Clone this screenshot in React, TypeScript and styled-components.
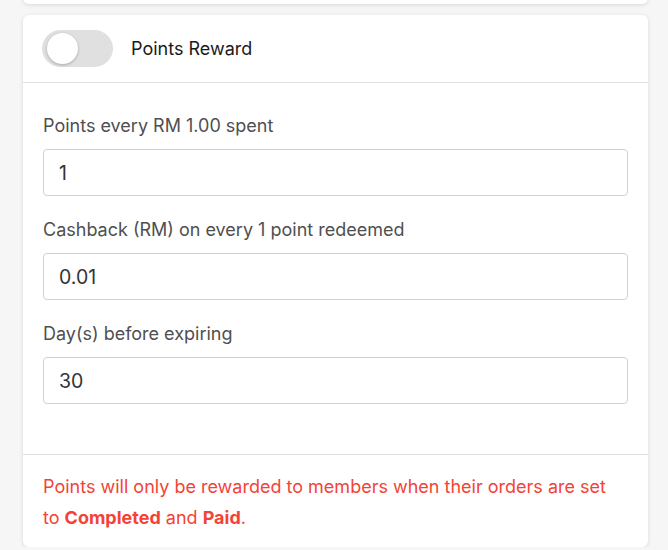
import React from "react";
import styled, { createGlobalStyle } from "styled-components";

const GlobalStyle = createGlobalStyle`
  html, body {
    margin: 0;
    padding: 0;
    background: #f6f6f6;
    font-family: Inter, "Noto Sans", sans-serif;
  }
`;

const Page = styled.div`
  margin-top: -40px;
  padding: 0 20px 0 23px;
  display: flex;
  flex-direction: column;
  gap: 11px;
`;

const Card = styled.div<{ $stub?: boolean }>`
  background: #fff;
  border-radius: 6px;
  box-shadow: 0 1px 4px rgba(0, 0, 0, 0.12);
  height: ${(p) => (p.$stub ? "44px" : "auto")};
`;

const Header = styled.div`
  display: flex;
  align-items: center;
  gap: 18px;
  height: 67px;
  padding: 0 20px 0 19px;
  border-bottom: 1px solid #e2e2e2;
`;

const Track = styled.div<{ $on?: boolean }>`
  width: 71px;
  height: 37px;
  border-radius: 19px;
  background: ${(p) => (p.$on ? "#4caf50" : "#e0e0e0")};
  display: flex;
  align-items: center;
  padding: 0 5px;
  box-sizing: border-box;
`;

const Knob = styled.div`
  width: 31px;
  height: 31px;
  border-radius: 50%;
  background: #fff;
  box-shadow: 0 1px 3px rgba(0, 0, 0, 0.25);
`;

const Title = styled.div`
  font-size: 18px;
  color: #1a1a1a;
`;

const Body = styled.div`
  padding: 31px 20px 50px;
  display: flex;
  flex-direction: column;
  gap: 22px;
`;

const Group = styled.div`
  display: flex;
  flex-direction: column;
  gap: 11px;
`;

const Label = styled.label`
  font-size: 18px;
  line-height: 24px;
  color: #4f4f4f;
`;

const Input = styled.input`
  height: 47px;
  box-sizing: border-box;
  border: 1px solid #cfd1d6;
  border-radius: 4px;
  padding: 0 15px;
  font-family: inherit;
  font-size: 19.5px;
  color: #333;
  outline: none;
  width: 100%;
`;

const Footer = styled.div`
  border-top: 1px solid #e2e2e2;
  padding: 16px 34px 14px 20px;
  font-size: 18px;
  line-height: 31px;
  color: #f44336;

  b {
    font-weight: 700;
  }
`;

const fields = [
  { label: "Points every RM 1.00 spent", value: "1" },
  { label: "Cashback (RM) on every 1 point redeemed", value: "0.01" },
  { label: "Day(s) before expiring", value: "30" },
];

export default function App() {
  return (
    <>
      <GlobalStyle />
      <Page>
        <Card $stub />
        <Card>
          <Header>
            <Track>
              <Knob />
            </Track>
            <Title>Points Reward</Title>
          </Header>
          <Body>
            {fields.map((f) => (
              <Group key={f.label}>
                <Label>{f.label}</Label>
                <Input defaultValue={f.value} />
              </Group>
            ))}
          </Body>
          <Footer>
            Points will only be rewarded to members when their orders are set
            to <b>Completed</b> and <b>Paid</b>.
          </Footer>
        </Card>
      </Page>
    </>
  );
}
